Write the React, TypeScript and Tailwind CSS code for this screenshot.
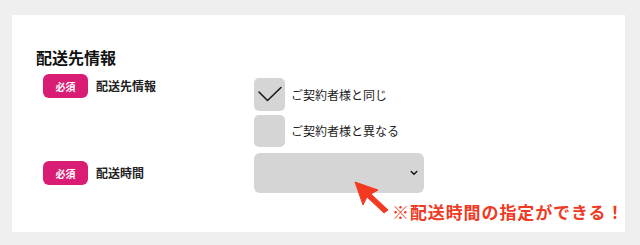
export default function App() {
  return (
    <div
      className="w-[640px] h-[245px] bg-[#efefef] pt-[15px] pl-[12px] overflow-hidden"
      style={{ fontFamily: '"Noto Sans CJK JP", "Noto Sans", sans-serif' }}
    >
      {/* Card */}
      <div className="relative w-[613px] h-[217px] bg-white pt-[30px] pl-[24px]">
        <h2 className="text-[16px] leading-[24px] font-bold text-[#111]">配送先情報</h2>

        {/* Row: 配送先情報 */}
        <div className="flex mt-[5px]">
          <div className="flex items-center gap-[8px] w-[218px] pl-[7px] h-[24px]">
            <span className="flex items-center justify-center w-[45px] h-[24px] rounded-[6px] bg-[#d91c74] text-white text-[10px] font-bold">
              必須
            </span>
            <span className="text-[12px] font-bold text-[#222]">配送先情報</span>
          </div>
          <div className="flex flex-col gap-[4px] pt-[4px]">
            <label className="flex items-center gap-[6px]">
              <span className="flex items-center justify-center w-[31px] h-[33px] rounded-[5px] bg-[#d5d5d5]">
                <svg width="26" height="18" viewBox="0 0 26 18" fill="none">
                  <path d="M2 6l8.5 8.5L24 1.5" stroke="#1a1a1a" strokeWidth="1.6" strokeLinecap="round" strokeLinejoin="round" />
                </svg>
              </span>
              <span className="text-[12px] text-[#222]">ご契約者様と同じ</span>
            </label>
            <label className="flex items-center gap-[6px]">
              <span className="w-[31px] h-[32px] rounded-[5px] bg-[#d5d5d5]" />
              <span className="text-[12px] text-[#222]">ご契約者様と異なる</span>
            </label>
          </div>
        </div>

        {/* Row: 配送時間 */}
        <div className="flex items-center mt-[6px]">
          <div className="flex items-center gap-[8px] w-[218px] pl-[7px]">
            <span className="flex items-center justify-center w-[45px] h-[24px] rounded-[6px] bg-[#d91c74] text-white text-[10px] font-bold">
              必須
            </span>
            <span className="text-[12px] font-bold text-[#222]">配送時間</span>
          </div>
          <div className="flex items-center justify-end w-[170px] h-[40px] rounded-[6px] bg-[#d5d5d5] pr-[6px]">
            <svg width="8" height="6" viewBox="0 0 8 6" fill="none">
              <path d="M1.2 1.5L4 4.3l2.8-2.8" stroke="#111" strokeWidth="1.4" strokeLinecap="round" strokeLinejoin="round" />
            </svg>
          </div>
        </div>

        {/* Annotation arrow */}
        <svg className="absolute left-[338px] top-[162px]" width="42" height="40" viewBox="0 0 42 40" fill="none">
          <path d="M5 5L28 13L21 17L38 33L34 36L17 20L13 28Z" fill="#f23a22" stroke="#f23a22" strokeWidth="1" strokeLinejoin="round" />
        </svg>
        <span className="absolute left-[380px] top-[185px] text-[17px] leading-[24px] font-bold tracking-[0.9px] text-[#ef3a24] whitespace-nowrap">
          ※配送時間の指定ができる！
        </span>
      </div>
    </div>
  );
}
